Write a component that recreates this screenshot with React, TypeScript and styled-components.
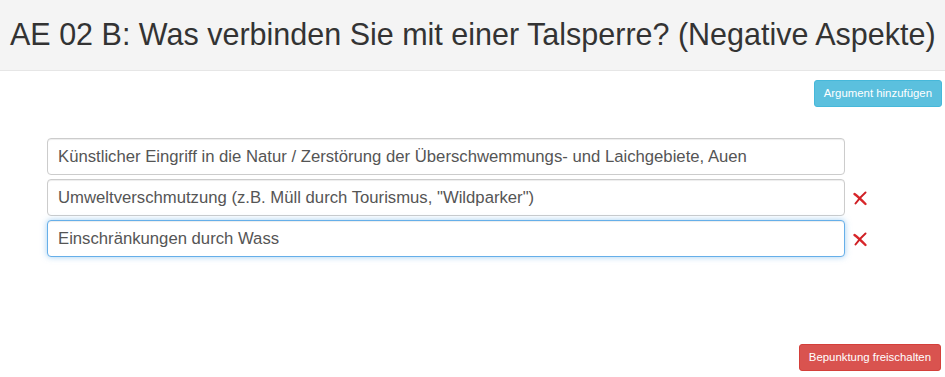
import styled, { createGlobalStyle } from "styled-components";

const GlobalStyle = createGlobalStyle`
  html, body {
    margin: 0;
    padding: 0;
    background: #fff;
    font-family: "Liberation Sans", Arial, sans-serif;
    color: #333;
  }
`;

const Page = styled.div`
  display: flex;
  flex-direction: column;
  height: 100vh;
`;

const Header = styled.header`
  height: 70px;
  display: flex;
  align-items: center;
  padding-left: 10px;
  background-color: #f4f4f4;
  border-bottom: 1px solid #e6e6e6;
  box-sizing: content-box;
`;

const Title = styled.h1`
  margin: 0;
  font-size: 30.5px;
  font-weight: 400;
  line-height: 1.1;
  color: #333;
  white-space: nowrap;
`;

const Toolbar = styled.div`
  display: flex;
  justify-content: flex-end;
  padding: 9px 3px 0 0;
`;

const Button = styled.button<{ $variant: "info" | "danger" }>`
  font-family: inherit;
  font-size: 11.4px;
  line-height: 17px;
  padding: 4px 9px;
  border-radius: 3px;
  color: #fff;
  cursor: pointer;
  border: 1px solid
    ${({ $variant }) => ($variant === "info" ? "#46b8da" : "#d43f3a")};
  background-color: ${({ $variant }) =>
    $variant === "info" ? "#5bc0de" : "#d9534f"};
`;

const List = styled.div`
  display: flex;
  flex-direction: column;
  gap: 4px;
  padding: 31px 0 0 47px;
`;

const Row = styled.div`
  display: flex;
  align-items: center;
  gap: 7px;
`;

const Input = styled.input<{ $focused?: boolean }>`
  box-sizing: border-box;
  width: 798px;
  height: 37px;
  padding: 6px 10px;
  font-family: inherit;
  font-size: 16.7px;
  color: #555;
  background: #fff;
  border-radius: 4px;
  border: 1px solid ${({ $focused }) => ($focused ? "#66afe9" : "#ccc")};
  box-shadow: ${({ $focused }) =>
    $focused
      ? "inset 0 1px 1px rgba(0,0,0,.075), 0 0 6px rgba(102,175,233,.6)"
      : "inset 0 1px 1px rgba(0,0,0,.075)"};
  outline: none;
`;

const Remove = styled.span`
  display: inline-flex;
  width: 16px;
  height: 16px;
  cursor: pointer;
`;

const Footer = styled.div`
  margin-top: auto;
  display: flex;
  justify-content: flex-end;
  padding: 0 4px 6px 0;
`;

const RemoveIcon = () => (
  <Remove>
    <svg width="16" height="16" viewBox="0 0 16 16">
      <path
        d="M2.5 4 C6 6.5 9.5 10 13.5 14"
        stroke="#d8262a"
        strokeWidth="2.4"
        strokeLinecap="round"
        fill="none"
      />
      <path
        d="M13.5 2.5 C10 5.5 6.5 9.5 3.5 13.5"
        stroke="#cf1f24"
        strokeWidth="2"
        strokeLinecap="round"
        fill="none"
      />
    </svg>
  </Remove>
);

const args = [
  {
    text: "Künstlicher Eingriff in die Natur / Zerstörung der Überschwemmungs- und Laichgebiete, Auen",
    removable: false,
  },
  {
    text: 'Umweltverschmutzung (z.B. Müll durch Tourismus, "Wildparker")',
    removable: true,
  },
  { text: "Einschränkungen durch Wass", removable: true, focused: true },
];

export default function App() {
  return (
    <Page>
      <GlobalStyle />
      <Header>
        <Title>AE 02 B: Was verbinden Sie mit einer Talsperre? (Negative Aspekte)</Title>
      </Header>
      <Toolbar>
        <Button $variant="info">Argument hinzufügen</Button>
      </Toolbar>
      <List>
        {args.map((a) => (
          <Row key={a.text}>
            <Input defaultValue={a.text} $focused={a.focused} />
            {a.removable && <RemoveIcon />}
          </Row>
        ))}
      </List>
      <Footer>
        <Button $variant="danger">Bepunktung freischalten</Button>
      </Footer>
    </Page>
  );
}
